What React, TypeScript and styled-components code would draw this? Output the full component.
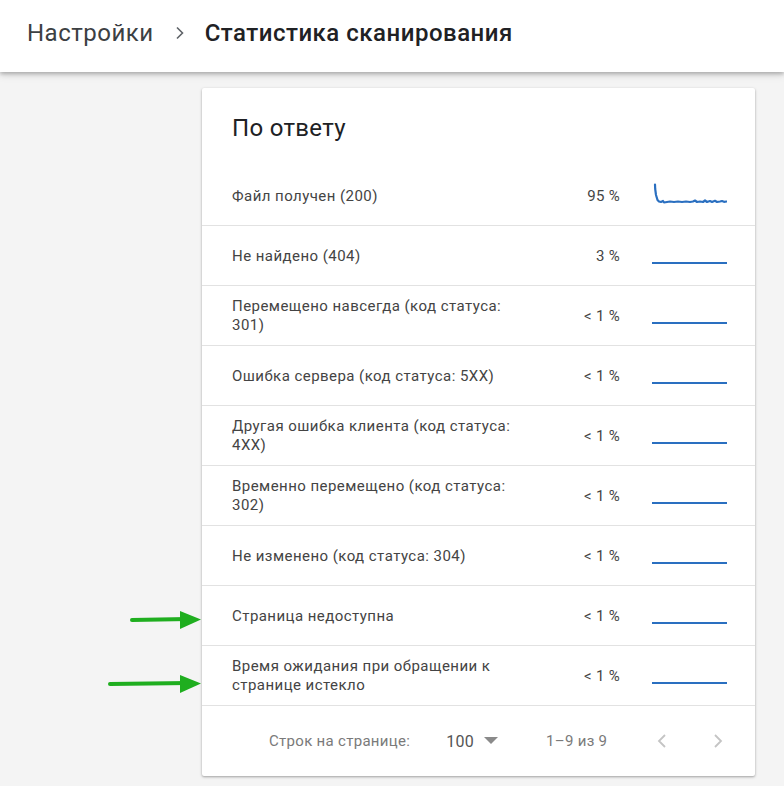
import React from 'react'
import styled, {createGlobalStyle} from 'styled-components'

const GlobalStyle = createGlobalStyle`
  html, body {
    margin: 0;
    padding: 0;
    background: #f4f4f4;
    font-family: Roboto, 'Noto Sans', sans-serif;
  }
`

const Page = styled.div`
  position: relative;
  width: 784px;
  height: 786px;
  overflow: hidden;
  background: #f4f4f4;
`

const Header = styled.header`
  display: flex;
  align-items: center;
  height: 66px;
  padding: 0 0 6px 27px;
  background: #ffffff;
  box-shadow: 0 2px 4px rgba(0, 0, 0, 0.25), 0 4px 8px rgba(0, 0, 0, 0.08);
  position: relative;
  z-index: 1;
  font-size: 24px;
  letter-spacing: 0.5px;
  color: #202124;
  .crumb{
    font-weight: 400;
    color: #3c4043;
  }
  .current{
    font-weight: 500;
    color: #202124;
  }
`

const Chevron = styled.span`
  display: flex;
  align-items: center;
  margin: 0 20px 0 21px;
  color: #5f6368;
`

const Main = styled.main`
  padding: 16px 0 0 202px;
`

const Card = styled.section`
  width: 553px;
  background: #ffffff;
  border-radius: 2px;
  box-shadow: 0 1px 3px rgba(0, 0, 0, 0.25), 0 1px 2px rgba(0, 0, 0, 0.12);
`

const Title = styled.h2`
  margin: 0;
  padding: 26px 30px 0 30px;
  height: 52px;
  font-size: 24px;
  font-weight: 400;
  letter-spacing: 0.3px;
  color: #202124;
  line-height: 28px;
`

const Row = styled.div`
  display: flex;
  align-items: center;
  height: 60px;
  padding: 0 28px 0 30px;
  border-bottom: 1px solid #e2e2e2;
  box-sizing: border-box;
`

const Label = styled.div`
  width: 300px;
  margin-top: 1px;
  font-size: 15px;
  letter-spacing: 0.45px;
  line-height: 19px;
  color: #444;
`

const Percent = styled.div`
  width: 88px;
  text-align: right;
  font-size: 15px;
  letter-spacing: 0.3px;
  color: #444;
  white-space: nowrap;
`

const Spark = styled.svg`
  margin-left: 32px;
  width: 75px;
  height: 30px;
`

const Footer = styled.div`
  display: flex;
  align-items: center;
  height: 70px;
  padding-left: 67px;
  font-size: 15px;
  letter-spacing: 0.3px;
  color: #7a7a7a;
  .rows{
    margin-right: 36px;
  }
  .count{
    color: #555;
    font-size: 16px;
  }
  .range{
    margin-left: 48px;
  }
`

const Select = styled.div`
  display: flex;
  align-items: center;
  gap: 10px;
`

const PageButton = styled.span`
  display: flex;
  align-items: center;
  color: #c4c4c4;
  margin-left: ${({$gap}: {$gap: number}) => $gap}px;
`

const Arrow = styled.svg`
  position: absolute;
  left: ${({$x}: {$x: number; $y: number}) => $x}px;
  top: ${({$y}) => $y}px;
`

type RowType = {
    label: string,
    value: string,
    busy?: boolean
}

const rows: RowType[] = [
    {label: 'Файл получен (200)', value: '95 %', busy: true},
    {label: 'Не найдено (404)', value: '3 %'},
    {label: 'Перемещено навсегда (код статуса: 301)', value: '< 1 %'},
    {label: 'Ошибка сервера (код статуса: 5XX)', value: '< 1 %'},
    {label: 'Другая ошибка клиента (код статуса: 4XX)', value: '< 1 %'},
    {label: 'Временно перемещено (код статуса: 302)', value: '< 1 %'},
    {label: 'Не изменено (код статуса: 304)', value: '< 1 %'},
    {label: 'Страница недоступна', value: '< 1 %'},
    {label: 'Время ожидания при обращении к странице истекло', value: '< 1 %'},
]

const busyPath =
    'M3 3.5 L3.2 8 L4 14 L5.5 19 L7 20.5 L9 21 L11 20 L12 21.5 L15 21 L18 20.5 L22 21 L26 20.5 L30 21 L34 20.5 L38 21 L41 20.5 L43 19.5 L45 21 L48 20.5 L51 21 L53 19.5 L55 21 L58 20 L60 21 L63 19.8 L65 21 L68 20.5 L70 20 L72 20.8 L74.5 20.5'

const Sparkline: React.FC<{busy?: boolean}> = ({busy}) => (
    <Spark viewBox='0 0 75 30'>
        {busy
            ? <path d={busyPath} fill='none' stroke='#2a6fc0' strokeWidth='2.2' strokeLinejoin='round' strokeLinecap='round'/>
            : <line x1='0' y1='22' x2='75' y2='22' stroke='#2a6fc0' strokeWidth='2'/>}
    </Spark>
)

const GreenArrow: React.FC<{x: number, y: number, w: number}> = ({x, y, w}) => (
    <Arrow $x={x} $y={y} width={w} height='22' viewBox={`0 0 ${w} 22`}>
        <path d={`M2 11 L${w - 14} 10`} stroke='#1fae1f' strokeWidth='4' strokeLinecap='round'/>
        <path d={`M${w - 22} 2 L${w - 1} 10.5 L${w - 22} 20 Z`} fill='#1fae1f'/>
    </Arrow>
)

const App: React.FC = () => {
    return (
        <Page>
            <GlobalStyle/>
            <Header>
                <span className='crumb'>Настройки</span>
                <Chevron>
                    <svg width='10' height='14' viewBox='0 0 10 14'>
                        <path d='M2 1.5 L7.5 7 L2 12.5' fill='none' stroke='#5f6368' strokeWidth='1.6'/>
                    </svg>
                </Chevron>
                <span className='current'>Статистика сканирования</span>
            </Header>
            <Main>
                <Card>
                    <Title>По ответу</Title>
                    {rows.map((r) => (
                        <Row key={r.label}>
                            <Label>{r.label}</Label>
                            <Percent>{r.value}</Percent>
                            <Sparkline busy={r.busy}/>
                        </Row>
                    ))}
                    <Footer>
                        <span className='rows'>Строк на странице:</span>
                        <Select>
                            <span className='count'>100</span>
                            <svg width='14' height='8' viewBox='0 0 14 8'>
                                <path d='M0 0 L14 0 L7 7 Z' fill='#8a8a8a'/>
                            </svg>
                        </Select>
                        <span className='range'>1–9 из 9</span>
                        <PageButton $gap={50}>
                            <svg width='10' height='16' viewBox='0 0 10 16'>
                                <path d='M8 2 L2 8 L8 14' fill='none' stroke='#c4c4c4' strokeWidth='1.8'/>
                            </svg>
                        </PageButton>
                        <PageButton $gap={46}>
                            <svg width='10' height='16' viewBox='0 0 10 16'>
                                <path d='M2 2 L8 8 L2 14' fill='none' stroke='#c4c4c4' strokeWidth='1.8'/>
                            </svg>
                        </PageButton>
                    </Footer>
                </Card>
            </Main>
            <GreenArrow x={130} y={609} w={72}/>
            <GreenArrow x={108} y={673} w={94}/>
        </Page>
    )
}

export default App
